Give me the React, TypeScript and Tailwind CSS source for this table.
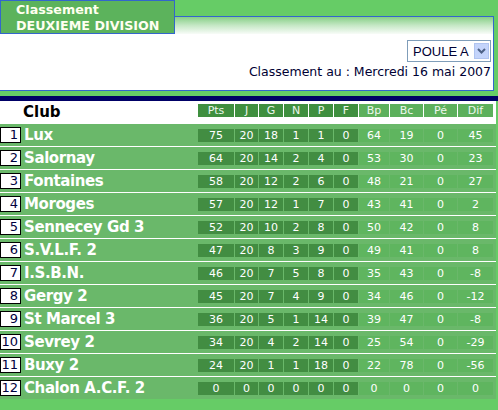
import React from "react";

type Team = {
  rank: number;
  name: string;
  pts: number;
  j: number;
  g: number;
  n: number;
  p: number;
  f: number;
  bp: number;
  bc: number;
  pe: number;
  dif: number;
};

const TEAMS: Team[] = [
  { rank: 1, name: "Lux", pts: 75, j: 20, g: 18, n: 1, p: 1, f: 0, bp: 64, bc: 19, pe: 0, dif: 45 },
  { rank: 2, name: "Salornay", pts: 64, j: 20, g: 14, n: 2, p: 4, f: 0, bp: 53, bc: 30, pe: 0, dif: 23 },
  { rank: 3, name: "Fontaines", pts: 58, j: 20, g: 12, n: 2, p: 6, f: 0, bp: 48, bc: 21, pe: 0, dif: 27 },
  { rank: 4, name: "Moroges", pts: 57, j: 20, g: 12, n: 1, p: 7, f: 0, bp: 43, bc: 41, pe: 0, dif: 2 },
  { rank: 5, name: "Sennecey Gd 3", pts: 52, j: 20, g: 10, n: 2, p: 8, f: 0, bp: 50, bc: 42, pe: 0, dif: 8 },
  { rank: 6, name: "S.V.L.F. 2", pts: 47, j: 20, g: 8, n: 3, p: 9, f: 0, bp: 49, bc: 41, pe: 0, dif: 8 },
  { rank: 7, name: "I.S.B.N.", pts: 46, j: 20, g: 7, n: 5, p: 8, f: 0, bp: 35, bc: 43, pe: 0, dif: -8 },
  { rank: 8, name: "Gergy 2", pts: 45, j: 20, g: 7, n: 4, p: 9, f: 0, bp: 34, bc: 46, pe: 0, dif: -12 },
  { rank: 9, name: "St Marcel 3", pts: 36, j: 20, g: 5, n: 1, p: 14, f: 0, bp: 39, bc: 47, pe: 0, dif: -8 },
  { rank: 10, name: "Sevrey 2", pts: 34, j: 20, g: 4, n: 2, p: 14, f: 0, bp: 25, bc: 54, pe: 0, dif: -29 },
  { rank: 11, name: "Buxy 2", pts: 24, j: 20, g: 1, n: 1, p: 18, f: 0, bp: 22, bc: 78, pe: 0, dif: -56 },
  { rank: 12, name: "Chalon A.C.F. 2", pts: 0, j: 0, g: 0, n: 0, p: 0, f: 0, bp: 0, bc: 0, pe: 0, dif: 0 },
];

// column widths in px, first six are the dark ones
const COLS: { label: string; key: keyof Team; w: string; dark: boolean }[] = [
  { label: "Pts", key: "pts", w: "w-[36px]", dark: true },
  { label: "J", key: "j", w: "w-[23px]", dark: true },
  { label: "G", key: "g", w: "w-[24px]", dark: true },
  { label: "N", key: "n", w: "w-[24px]", dark: true },
  { label: "P", key: "p", w: "w-[24px]", dark: true },
  { label: "F", key: "f", w: "w-[24px]", dark: true },
  { label: "Bp", key: "bp", w: "w-[30px]", dark: false },
  { label: "Bc", key: "bc", w: "w-[33px]", dark: false },
  { label: "Pé", key: "pe", w: "w-[33px]", dark: false },
  { label: "Dif", key: "dif", w: "w-[35px]", dark: false },
];

const App: React.FC = () => {
  return (
    <div className="w-[498px] h-[410px] bg-[#66cc66] flex flex-col overflow-hidden font-['DejaVu_Sans',sans-serif]">
      {/* Title bar */}
      <div className="flex h-[34px]">
        <div className="w-[175px] h-[34px] border border-[#3366cc] bg-[#5cb35c] pl-[15px] pt-[1px] text-[#fffff0] font-bold text-[12.7px] leading-[16px]">
          <div>Classement</div>
          <div>DEUXIEME DIVISION</div>
        </div>
        <div className="flex-1 flex flex-col">
          <div className="h-[16px]" />
          <div className="flex-1 mr-[4px] border-t border-r border-[#3366cc] bg-gradient-to-b from-[#86cf86] via-[#c6e8c6] to-[#f8fcf8]" />
        </div>
      </div>

      {/* Poule select + date */}
      <div className="h-[57px] mr-[4px] bg-white border-r border-b border-[#3366cc] flex flex-col items-end pr-[2px] pt-[6px]">
        <div className="w-[84px] h-[22px] border border-[#7f9db9] bg-white flex items-center justify-between pl-[5px] pr-[1px]">
          <span className="font-['Liberation_Sans',sans-serif] text-[13px] text-[#000033] leading-none">POULE A</span>
          <div className="w-[15px] h-[16px] bg-[#c4d4fb] border border-[#b0c4f0] flex items-center justify-center">
            <svg width="9" height="6" viewBox="0 0 9 6">
              <path d="M1 1 L4.5 4.5 L8 1" fill="none" stroke="#4d6185" strokeWidth="2" />
            </svg>
          </div>
        </div>
        <div className="mt-[3px] text-[12.5px] leading-[14px] text-[#000033] whitespace-nowrap">
          Classement au : Mercredi 16 mai 2007
        </div>
      </div>
      <div className="h-[5px]" />
      <div className="h-[5px] bg-[#000066]" />

      {/* Table */}
      <div className="w-[496px] h-[298px] bg-white flex flex-col gap-[1px]">
        <div className="h-[22px] flex items-start">
          <div className="w-[198px] pl-[23px] pt-[3px] font-bold text-[15px] leading-[17px] text-black">Club</div>
          <div className="flex gap-[1px] mt-[3px]">
            {COLS.map((c) => (
              <div
                key={c.label}
                className={`${c.w} h-[13px] text-[11px] leading-[13px] text-center text-[#eef7ee] ${
                  c.dark ? "bg-[#3f8f3f]" : "bg-[#5cb05c]"
                }`}
              >
                {c.label}
              </div>
            ))}
          </div>
        </div>
        {TEAMS.map((t) => (
          <div key={t.rank} className="h-[22px] bg-[#6ab86a] flex items-center">
            <div className="w-[21px] h-[16px] bg-white border border-black text-right pr-[2px] text-[13px] leading-[14px] text-[#000040]">
              {t.rank}
            </div>
            <div className="w-[177px] pl-[3px] font-bold text-[15px] leading-[18px] tracking-[-0.4px] text-white whitespace-nowrap">
              {t.name}
            </div>
            <div className="flex gap-[1px]">
              {COLS.map((c) => (
                <div
                  key={c.label}
                  className={`${c.w} h-[13px] text-[11px] leading-[13px] text-center text-white ${
                    c.dark ? "bg-[#428d42]" : "bg-[#5fb55f]"
                  }`}
                >
                  {t[c.key]}
                </div>
              ))}
            </div>
          </div>
        ))}
      </div>
    </div>
  );
};

export default App;
